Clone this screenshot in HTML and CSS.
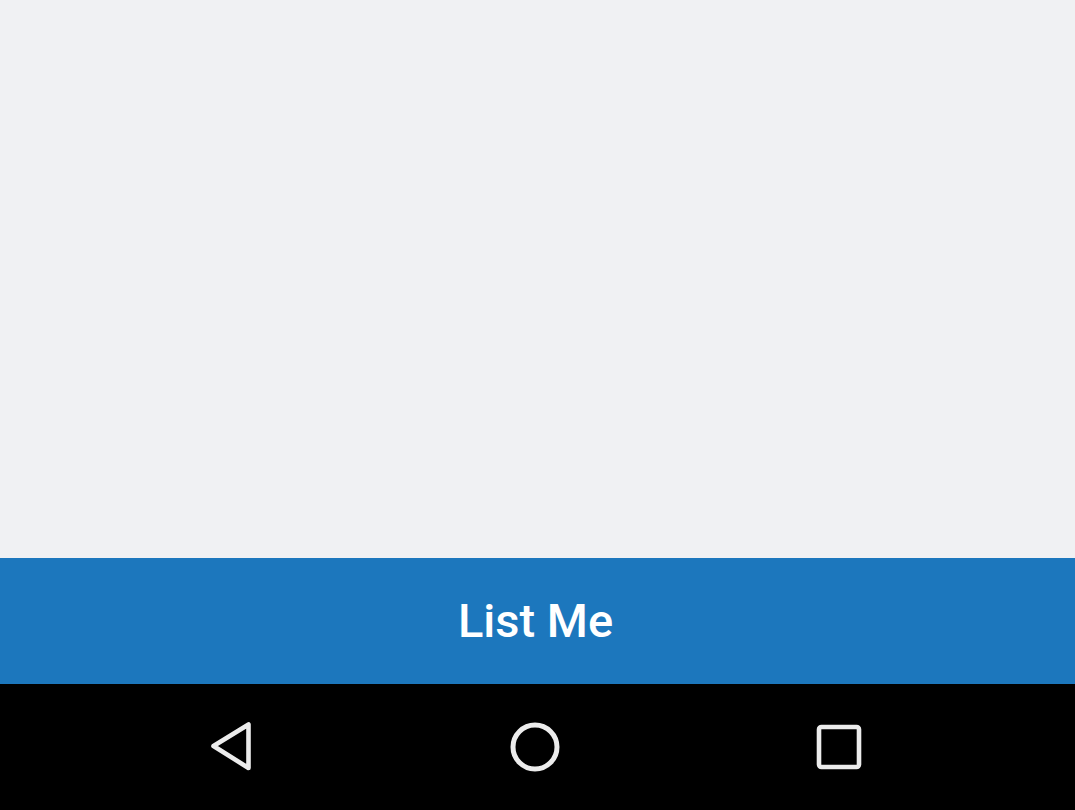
FILE: index.html
```html
<!DOCTYPE html>
<html>
<head>
<meta charset="utf-8">
<link rel="stylesheet" href="styles.css">
</head>
<body>
<div class="screen">
  <main class="content"></main>
  <button class="list-btn">List Me</button>
  <nav class="navbar">
    <svg class="nav-icon" width="60" height="60" viewBox="0 0 60 60">
      <path d="M47.5 7.5 L47.5 51 L12.5 29 Z" fill="none" stroke="#ececec" stroke-width="4.6" stroke-linejoin="round"/>
    </svg>
    <svg class="nav-icon" width="60" height="60" viewBox="0 0 60 60">
      <circle cx="30" cy="30" r="22" fill="none" stroke="#ececec" stroke-width="5"/>
    </svg>
    <svg class="nav-icon" width="60" height="60" viewBox="0 0 60 60">
      <rect x="10" y="10" width="40" height="40" rx="2.5" fill="none" stroke="#ececec" stroke-width="4.6"/>
    </svg>
  </nav>
</div>
</body>
</html>
```

FILE: styles.css
```css
html, body {
  margin: 0;
  padding: 0;
}
body {
  width: 1075px;
  height: 810px;
  overflow: hidden;
  font-family: Roboto, "Liberation Sans", sans-serif;
}
.screen {
  display: flex;
  flex-direction: column;
  height: 810px;
}
.content {
  height: 558px;
  background: #f0f1f3;
}
.list-btn {
  height: 126px;
  border: none;
  margin: 0;
  padding: 0 4px 2px 0;
  background: #1c77bd;
  color: #ffffff;
  font-family: Roboto, "Liberation Sans", sans-serif;
  font-weight: 500;
  font-size: 47px;
  display: flex;
  align-items: center;
  justify-content: center;
}
.navbar {
  height: 126px;
  background: #000000;
  display: flex;
  align-items: center;
  justify-content: center;
  gap: 244px;
  padding-right: 6px;
}
.nav-icon {
  display: block;
}
```
